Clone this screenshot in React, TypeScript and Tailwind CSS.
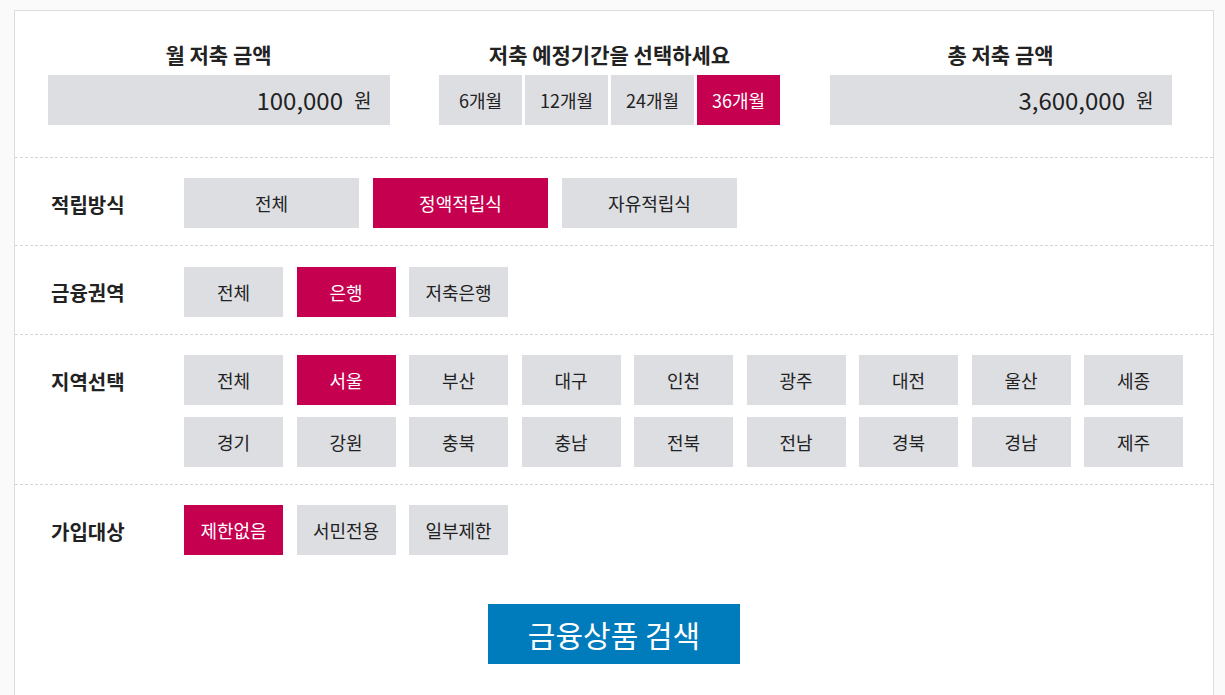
import { useState } from "react";

const periods = ["6개월", "12개월", "24개월", "36개월"];
const methods = ["전체", "정액적립식", "자유적립식"];
const sectors = ["전체", "은행", "저축은행"];
const regions = [
  "전체", "서울", "부산", "대구", "인천", "광주", "대전", "울산", "세종",
  "경기", "강원", "충북", "충남", "전북", "전남", "경북", "경남", "제주",
];
const targets = ["제한없음", "서민전용", "일부제한"];

const font = { fontFamily: '"Noto Sans CJK KR", "Noto Sans", sans-serif' };

function Chip({ label, active, onClick, wide }: { label: string; active: boolean; onClick: () => void; wide?: boolean }) {
  return (
    <button
      type="button"
      onClick={onClick}
      className={`h-[50px] text-[18px] leading-none ${wide ? "w-[175px]" : "w-full"} ${
        active ? "bg-[#c5004f] text-white" : "bg-[#dddee2] text-[#222]"
      }`}
    >
      {label}
    </button>
  );
}

function Row({ label, children }: { label: string; children: React.ReactNode }) {
  return (
    <div className="flex items-start border-t border-dashed border-[#d6d6d6] pl-[36px] pt-5 pb-[17px]">
      <div className="flex h-[50px] w-[133px] shrink-0 items-center pt-[3px] text-[20px] font-bold text-[#222]">{label}</div>
      {children}
    </div>
  );
}

function AmountBox({ value }: { value: number }) {
  return (
    <div className="flex h-[50px] w-[342px] items-center justify-end bg-[#dddee2] pr-[18px] text-[#222]">
      <span className="text-[24px]">{value.toLocaleString("en-US")}</span>
      <span className="ml-[11px] text-[19px]">원</span>
    </div>
  );
}

export default function App() {
  const [period, setPeriod] = useState("36개월");
  const [method, setMethod] = useState("정액적립식");
  const [sector, setSector] = useState("은행");
  const [region, setRegion] = useState("서울");
  const [target, setTarget] = useState("제한없음");

  const months = parseInt(period, 10);
  const monthly = 100000;

  return (
    <div className="min-h-[695px] bg-[#fafafa] pt-[10px] pl-[14px]" style={font}>
      <div className="w-[1200px] border border-[#dcdcdc] bg-white pb-[40px]">
        <div className="grid grid-cols-3 pl-[8px] pr-[17px] pt-[29px] pb-[32px]">
          <div className="flex flex-col items-center">
            <h2 className="mb-[7px] text-[21px] leading-[28px] font-bold text-[#222]">월 저축 금액</h2>
            <AmountBox value={monthly} />
          </div>
          <div className="flex flex-col items-center">
            <h2 className="mb-[7px] text-[21px] leading-[28px] font-bold text-[#222]">저축 예정기간을 선택하세요</h2>
            <div className="flex gap-[3.5px]">
              {periods.map((p) => (
                <button
                  key={p}
                  type="button"
                  onClick={() => setPeriod(p)}
                  className={`h-[50px] w-[82.5px] text-[18px] ${
                    period === p ? "bg-[#c5004f] text-white" : "bg-[#dddee2] text-[#222]"
                  }`}
                >
                  {p}
                </button>
              ))}
            </div>
          </div>
          <div className="flex flex-col items-center">
            <h2 className="mb-[7px] text-[21px] leading-[28px] font-bold text-[#222]">총 저축 금액</h2>
            <AmountBox value={monthly * months} />
          </div>
        </div>

        <Row label="적립방식">
          <div className="flex gap-[14px]">
            {methods.map((m) => (
              <Chip key={m} label={m} wide active={method === m} onClick={() => setMethod(m)} />
            ))}
          </div>
        </Row>

        <Row label="금융권역">
          <div className="grid w-[999px] grid-cols-9 gap-x-[13.5px] pt-px">
            {sectors.map((s) => (
              <Chip key={s} label={s} active={sector === s} onClick={() => setSector(s)} />
            ))}
          </div>
        </Row>

        <Row label="지역선택">
          <div className="grid w-[999px] grid-cols-9 gap-x-[13.5px] gap-y-[12px]">
            {regions.map((r) => (
              <Chip key={r} label={r} active={region === r} onClick={() => setRegion(r)} />
            ))}
          </div>
        </Row>

        <Row label="가입대상">
          <div className="grid w-[999px] grid-cols-9 gap-x-[13.5px]">
            {targets.map((t) => (
              <Chip key={t} label={t} active={target === t} onClick={() => setTarget(t)} />
            ))}
          </div>
        </Row>

        <div className="mt-[32px] flex justify-center">
          <button type="button" className="h-[60px] w-[252px] bg-[#007bbb] text-[30px] text-white">
            금융상품 검색
          </button>
        </div>
      </div>
    </div>
  );
}
